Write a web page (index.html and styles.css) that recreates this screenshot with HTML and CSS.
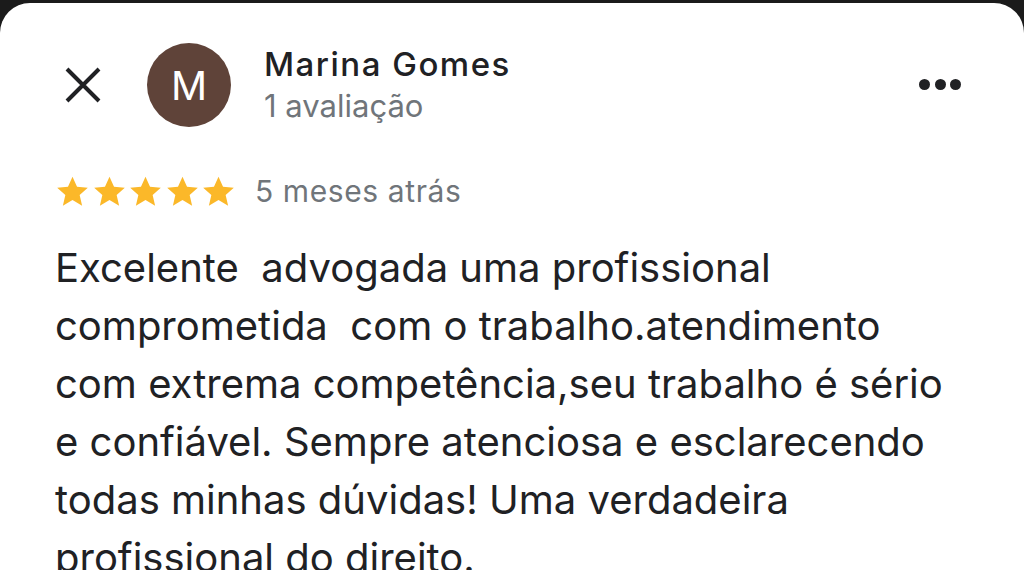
FILE: index.html
```html
<!DOCTYPE html>
<html lang="pt">
<head>
<meta charset="utf-8">
<link rel="stylesheet" href="styles.css">
</head>
<body>
<div class="sheet">
  <div class="header">
    <svg class="close" viewBox="0 0 36 36" width="36" height="36"><path d="M2 2 L34 34 M34 2 L2 34" stroke="#202124" stroke-width="4" stroke-linecap="butt"/></svg>
    <div class="avatar">M</div>
    <div class="who">
      <div class="name">Marina Gomes</div>
      <div class="count">1 avaliação</div>
    </div>
    <div class="more"><span></span><span></span><span></span></div>
  </div>
  <div class="meta">
    <div class="stars">
      <svg viewBox="0 0 24 24" width="35" height="35"><path d="M12 1.8l3.1 6.9 7.4.7-5.6 5 1.7 7.4L12 17.9l-6.6 3.9 1.7-7.4-5.6-5 7.4-.7z" fill="#fbb829"/></svg>
      <svg viewBox="0 0 24 24" width="35" height="35"><path d="M12 1.8l3.1 6.9 7.4.7-5.6 5 1.7 7.4L12 17.9l-6.6 3.9 1.7-7.4-5.6-5 7.4-.7z" fill="#fbb829"/></svg>
      <svg viewBox="0 0 24 24" width="35" height="35"><path d="M12 1.8l3.1 6.9 7.4.7-5.6 5 1.7 7.4L12 17.9l-6.6 3.9 1.7-7.4-5.6-5 7.4-.7z" fill="#fbb829"/></svg>
      <svg viewBox="0 0 24 24" width="35" height="35"><path d="M12 1.8l3.1 6.9 7.4.7-5.6 5 1.7 7.4L12 17.9l-6.6 3.9 1.7-7.4-5.6-5 7.4-.7z" fill="#fbb829"/></svg>
      <svg viewBox="0 0 24 24" width="35" height="35"><path d="M12 1.8l3.1 6.9 7.4.7-5.6 5 1.7 7.4L12 17.9l-6.6 3.9 1.7-7.4-5.6-5 7.4-.7z" fill="#fbb829"/></svg>
    </div>
    <div class="when">5 meses atrás</div>
  </div>
  <p class="review">Excelente&nbsp; advogada uma profissional<br>comprometida&nbsp; com o trabalho.atendimento<br>com extrema competência,seu trabalho é sério<br>e confiável. Sempre atenciosa e esclarecendo<br>todas minhas dúvidas! Uma verdadeira<br>profissional do direito.</p>
</div>
</body>
</html>
```
FILE: styles.css
```css
html, body {
  margin: 0;
  padding: 0;
  background: #1b1b1b;
  height: 100%;
  overflow: hidden;
}
body {
  font-family: Inter, Roboto, "Noto Sans", sans-serif;
  padding-top: 3px;
  box-sizing: border-box;
}
.sheet {
  background: #fff;
  border-radius: 30px 30px 0 0;
  height: 100%;
  padding: 40px 0 0 55px;
  box-sizing: border-box;
}
.header {
  display: flex;
  align-items: center;
  height: 84px;
}
.close {
  margin-left: 10px;
  flex: none;
}
.avatar {
  width: 84px;
  height: 84px;
  border-radius: 50%;
  background: #5f4339;
  color: #fff;
  font-size: 40px;
  display: flex;
  align-items: center;
  justify-content: center;
  margin-left: 46px;
  flex: none;
}
.who {
  margin-left: 33px;
  flex: 1;
}
.name {
  font-size: 33px;
  letter-spacing: 1.5px;
  color: #202124;
  line-height: 42px;
  font-weight: 500;
}
.count {
  font-size: 31px;
  color: #70757a;
  line-height: 42px;
}
.more {
  display: flex;
  gap: 4.5px;
  margin-right: 63px;
  margin-top: -2px;
}
.more span {
  width: 11px;
  height: 11px;
  border-radius: 50%;
  background: #202124;
}
.meta {
  display: flex;
  align-items: center;
  margin-top: 46px;
  height: 36px;
}
.stars {
  display: flex;
  gap: 1.5px;
}
.stars svg {
  display: block;
}
.when {
  font-size: 30px;
  letter-spacing: 0.6px;
  color: #70757a;
  margin-left: 19px;
}
.review {
  margin: 30px 0 0 0;
  font-size: 40px;
  line-height: 58px;
  color: #202124;
}
```
